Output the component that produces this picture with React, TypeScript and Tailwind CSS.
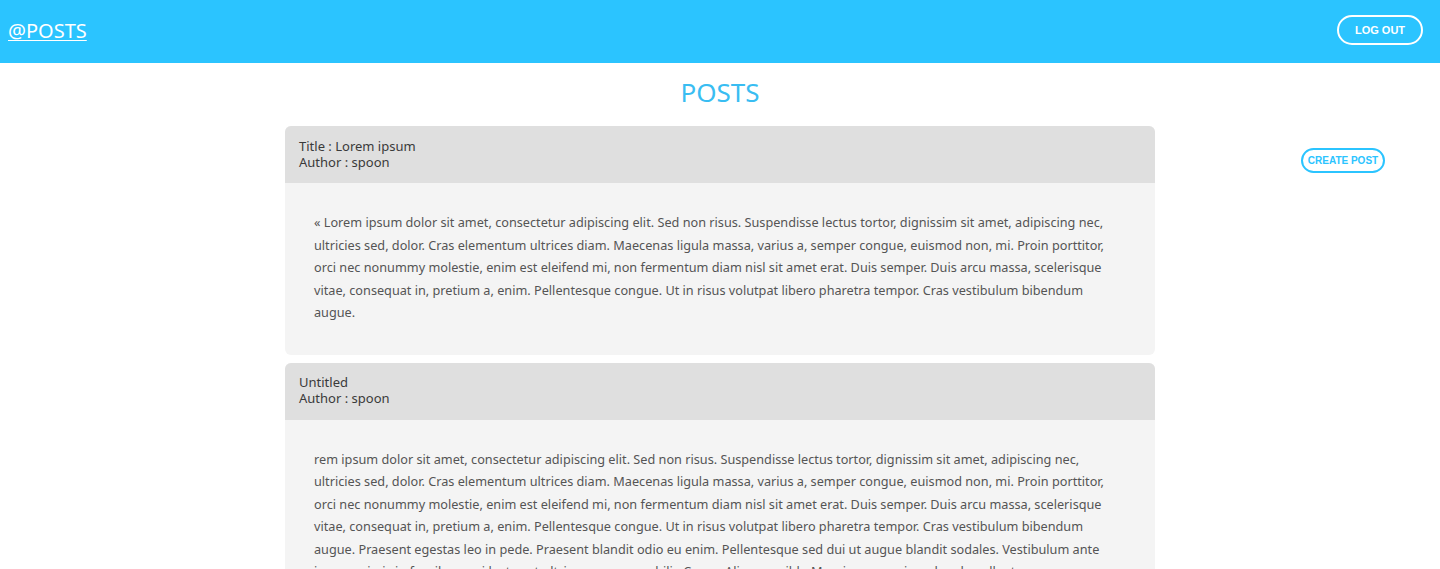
import React from "react";

const posts = [
  {
    title: "Title : Lorem ipsum",
    author: "spoon",
    lines: [
      "« Lorem ipsum dolor sit amet, consectetur adipiscing elit. Sed non risus. Suspendisse lectus tortor, dignissim sit amet, adipiscing nec,",
      "ultricies sed, dolor. Cras elementum ultrices diam. Maecenas ligula massa, varius a, semper congue, euismod non, mi. Proin porttitor,",
      "orci nec nonummy molestie, enim est eleifend mi, non fermentum diam nisl sit amet erat. Duis semper. Duis arcu massa, scelerisque",
      "vitae, consequat in, pretium a, enim. Pellentesque congue. Ut in risus volutpat libero pharetra tempor. Cras vestibulum bibendum",
      "augue.",
    ],
  },
  {
    title: "Untitled",
    author: "spoon",
    lines: [
      "rem ipsum dolor sit amet, consectetur adipiscing elit. Sed non risus. Suspendisse lectus tortor, dignissim sit amet, adipiscing nec,",
      "ultricies sed, dolor. Cras elementum ultrices diam. Maecenas ligula massa, varius a, semper congue, euismod non, mi. Proin porttitor,",
      "orci nec nonummy molestie, enim est eleifend mi, non fermentum diam nisl sit amet erat. Duis semper. Duis arcu massa, scelerisque",
      "vitae, consequat in, pretium a, enim. Pellentesque congue. Ut in risus volutpat libero pharetra tempor. Cras vestibulum bibendum",
      "augue. Praesent egestas leo in pede. Praesent blandit odio eu enim. Pellentesque sed dui ut augue blandit sodales. Vestibulum ante",
      "ipsum primis in faucibus orci luctus et ultrices posuere cubilia Curae; Aliquam nibh. Mauris ac mauris sed pede pellentesque",
      "fermentum. Maecenas adipiscing ante non diam sodales hendrerit.",
    ],
  },
];

const PostCard = ({ title, author, lines }: { title: string; author: string; lines: string[] }) => {
  return (
    <div className="rounded-md overflow-hidden bg-[#f4f4f4]">
      <div className="bg-[#dfdfdf] h-[57px] px-[14px] pb-[2px] flex flex-col justify-center text-[13px] leading-[16px] text-[#3a3a3a]">
        <span>{title}</span>
        <span>Author : {author}</span>
      </div>
      <p className="px-[29px] pt-[28px] pb-[31px] text-[12.7px] leading-[22.5px] text-[#555]">
        {lines.map((l, i) => (
          <React.Fragment key={i}>
            {l}
            {i < lines.length - 1 && <br />}
          </React.Fragment>
        ))}
      </p>
    </div>
  );
};

export default function App() {
  return (
    <div className="min-h-screen bg-white font-['Noto_Sans',sans-serif]">
      <header className="h-[63px] bg-[#2bc4ff] flex items-center justify-between pl-[8px] pr-[17px]">
        <a href="#" className="text-white text-[20px] underline underline-offset-2 decoration-1 -mt-[2px]">
          @POSTS
        </a>
        <button className="h-[30px] w-[86px] rounded-full border-2 border-white text-white text-[11px] font-bold font-['Liberation_Sans',sans-serif] -mt-[3px]">
          LOG OUT
        </button>
      </header>
      <h1 className="text-center text-[26px] leading-[30px] text-[#39bdf2] mt-[14px] mb-[19px]">POSTS</h1>
      <div className="grid grid-cols-[1fr_870px_1fr]">
        <div />
        <div className="flex flex-col gap-[8px]">
          {posts.map((p, i) => (
            <PostCard key={i} {...p} />
          ))}
        </div>
        <div className="flex justify-end pr-[55px] pt-[22px]">
          <button className="h-[25px] w-[84px] rounded-full border-2 border-[#2bc4ff] text-[#2bc4ff] text-[10px] font-bold font-['Liberation_Sans',sans-serif]">
            CREATE POST
          </button>
        </div>
      </div>
    </div>
  );
}
